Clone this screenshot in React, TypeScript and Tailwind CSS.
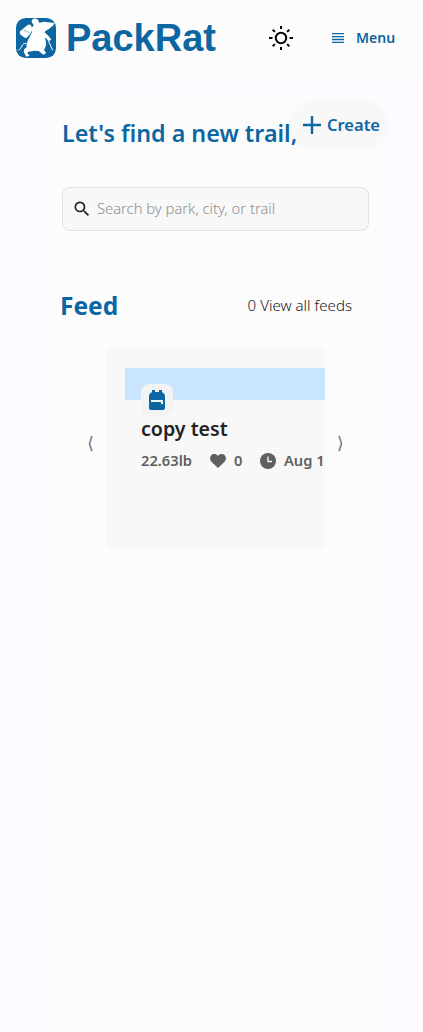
import { MdBackpack, MdSearch } from "react-icons/md";

function Logo() {
  return (
    <svg viewBox="0 0 120 120" className="h-10 w-10 shrink-0">
      <rect width="120" height="120" rx="29" fill="#0c66a1" />
      <g fill="#fff">
        <path d="M47 12C46 2 58 -2 66 5L70 14C76 15 81 9 89 12L116 15L112 22L99 33C92 37 88 38 86 43L101 58L106 66L99 68L86 58C90 69 93 81 87 89L84 97L91 105L82 110L68 99L54 98L48 100L37 101L34 106L41 113L31 116L23 102L25 93L32 88C30 79 35 66 41 57L48 42L46 31L53 22Z" />
        <path d="M19 34L35 21Q42 17 46 24L49 35L43 47L32 59Q29 62 24 58L14 50Q9 46 12 40Z" />
      </g>
      <path d="M20 35L40 44" stroke="#0c66a1" strokeWidth="1.5" fill="none" />
      <path d="M31 77C14 74 21 91 7 97M94 61L110 97" stroke="#fff" strokeWidth="3" fill="none" />
    </svg>
  );
}

function Sun() {
  return (
    <svg viewBox="0 0 24 24" className="h-6 w-6" fill="none" stroke="#000" strokeWidth="2">
      <circle cx="12" cy="12" r="5.2" />
      <path d="M12 0v3M12 21v3M0 12h3.5M20.5 12H24M3.7 3.7l2.2 2.2M18.1 18.1l2.2 2.2M20.3 3.7l-2.2 2.2M5.9 18.1l-2.2 2.2" />
    </svg>
  );
}

export default function App() {
  return (
    <div className="h-[1032px] w-full overflow-hidden bg-[#fdfbff] font-['Noto_Sans',sans-serif] text-[#0c66a1]">
      <header className="flex h-[76px] items-center bg-[#fcfcfc] pl-4">
        <Logo />
        <span className="ml-[10px] w-[203px] font-['Liberation_Sans',sans-serif] text-[38px] leading-none font-bold">PackRat</span>
        <Sun />
        <button className="ml-[39px] flex items-center">
          <svg viewBox="0 0 12 10" className="h-[10px] w-3" stroke="currentColor" strokeWidth="1.3">
            <path d="M0 .7h12M0 3.6h12M0 6.5h12M0 9.3h12" />
          </svg>
          <span className="ml-3 pb-[2px] text-[14px] font-semibold">Menu</span>
        </button>
      </header>
      <main className="mt-6 ml-[42px] h-[932px] w-[348px] bg-[#fcfcfc]">
        <section className="relative h-[87px]">
          <button className="absolute top-0 right-px flex h-[50px] w-[100px] items-center rounded-full bg-[#f8f8f8] pl-[14px]">
            <svg viewBox="0 0 18 18" className="h-[18px] w-[18px]" stroke="currentColor" strokeWidth="2.4">
              <path d="M9 0v18M0 9h18" />
            </svg>
            <span className="ml-[6px] text-[16.5px] font-semibold">Create</span>
          </button>
          <h1 className="relative w-fit pt-[17px] pl-5 text-[23.3px] leading-8 font-semibold whitespace-nowrap">Let's find a new trail,</h1>
        </section>
        <label className="ml-5 flex h-11 w-[307px] items-center rounded-lg border border-[#e2e2e2] bg-[#f8f8f8] pl-[9px]">
          <MdSearch className="h-5 w-5 text-[#232323]" />
          <span className="ml-[5px] pb-[2px] text-[14.75px] font-light text-[#8f8f8f]">Search by park, city, or trail</span>
        </label>
        <div className="mt-[59px] flex h-8 items-center justify-between pr-[38px] pl-[18px]">
          <h2 className="text-[24.5px] font-bold">Feed</h2>
          <span className="pb-[2px] text-[15.1px] font-light text-[#232323]">0 View all feeds</span>
        </div>
        <div className="mt-[26px] flex items-center text-[#6f6f6f]">
          <span className="flex w-16 justify-center pb-[9px] pl-[33px] font-['DejaVu_Sans',sans-serif] text-[17px] leading-none">⟨</span>
          <article className="h-[200px] w-[219px] overflow-hidden rounded-l bg-[#f8f8f8] pt-5 pl-[19px]">
            <div className="h-8 bg-[#cae5ff] pt-4 pl-4">
              <div className="flex h-8 w-8 items-center justify-center rounded-lg bg-[#f3f3f3]">
                <MdBackpack className="h-6 w-6 text-[#0c66a1]" />
              </div>
            </div>
            <h3 className="mt-[13px] pl-4 text-[19.6px] leading-8 font-semibold text-[#232323]">copy test</h3>
            <div className="flex h-8 items-center pl-4 text-[14.7px] leading-5 font-semibold whitespace-nowrap text-[#5f5f5f]">
              <span className="w-[69px] shrink-0 pb-[2px]">22.63lb</span>
              <svg viewBox="0 0 16 14" className="h-[14px] w-4 shrink-0" fill="currentColor">
                <path d="M8 14L1.4 7.7C-.4 5.9-.3 2.9 1.2 1.3 3-.6 6.3-.3 8 2c1.7-2.3 5-2.6 6.8-.7 1.5 1.6 1.6 4.6-.2 6.4Z" />
              </svg>
              <span className="ml-2 w-[26px] shrink-0 pb-[2px]">0</span>
              <svg viewBox="0 0 16 16" className="h-4 w-4 shrink-0">
                <circle cx="8" cy="8" r="8" fill="currentColor" />
                <path d="M8 3.5V8.5h4" stroke="#f8f8f8" strokeWidth="1.3" fill="none" />
              </svg>
              <span className="ml-2 shrink-0 pb-[2px]">Aug 1</span>
            </div>
          </article>
          <span className="ml-[12px] pb-[9px] font-['DejaVu_Sans',sans-serif] text-[17px] leading-none">⟩</span>
        </div>
      </main>
    </div>
  );
}
